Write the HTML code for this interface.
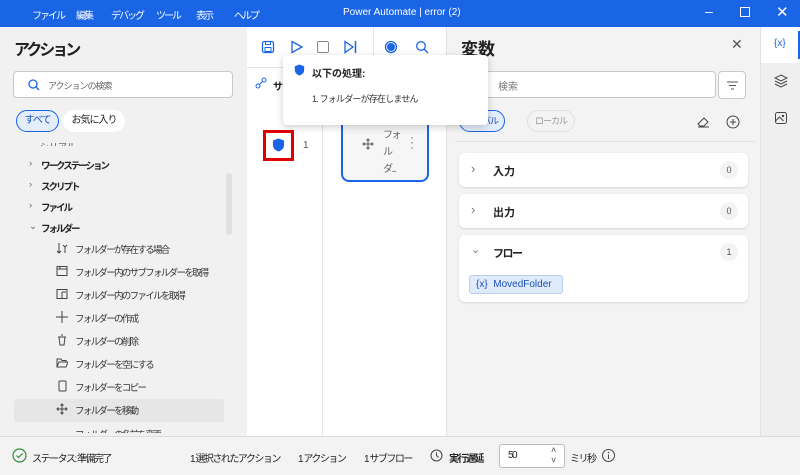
<!DOCTYPE html>
<html><head><meta charset="utf-8"><style>
*{margin:0;padding:0;box-sizing:border-box}
body{width:800px;height:475px;overflow:hidden;font-family:"Liberation Sans","Noto Sans CJK JP",sans-serif;background:#f3f3f3;position:relative;color:#222;font-size:11px}
.a{position:absolute}
.title{left:0;top:0;width:800px;height:27px;background:#1a64e6;color:#fff;font-size:10px}
.title span{position:absolute;top:7px}
.title .m{letter-spacing:-2px}
.left{left:0;top:27px;width:247px;height:409px;background:#f1f1f1}
.mid{left:247px;top:27px;width:199px;height:409px;background:#fff}
.var{left:446px;top:27px;width:314px;height:409px;background:#f3f3f3;border-left:1px solid #e3e3e3}
.strip{left:760px;top:27px;width:40px;height:409px;background:#efefef;border-left:1px solid #e0e0e0}
.status{left:0;top:436px;width:800px;height:39px;background:#f3f3f3;border-top:1px solid #dcdcdc}
.status span{letter-spacing:-1.5px}
.item{position:absolute;left:41px;font-size:9.5px;color:#222;letter-spacing:-2px;font-weight:bold}
.chev{position:absolute;left:-12px;color:#666;letter-spacing:0;font-weight:normal}
.fi{position:absolute;left:56px;width:12px;height:12px}
.ft{position:absolute;left:75px;font-size:9.5px;color:#333;letter-spacing:-1.7px;white-space:nowrap}
.card{position:absolute;left:459px;width:289px;background:#fff;border-radius:6px;box-shadow:0 1px 2px rgba(0,0,0,.12)}
.cnt{position:absolute;right:10px;top:10px;width:18px;height:18px;border-radius:9px;background:#f3f3f3;font-size:9px;text-align:center;line-height:18px;color:#555}
</style></head><body>
<div class="a title">
<span class="m" style="left:32px">ファイル</span><span class="m" style="left:76px">編集</span><span class="m" style="left:111px">デバッグ</span><span class="m" style="left:156px">ツール</span><span class="m" style="left:196px">表示</span><span class="m" style="left:234px">ヘルプ</span>
<span style="left:343px">Power Automate | error (2)</span>
<span style="left:705px;top:3px;font-size:14px">–</span>
<span style="left:740px;top:7px;width:10px;height:10px;border:1.5px solid #fff"></span>
<span style="left:776px;top:3px;font-size:15px">✕</span>
</div>

<div class="a left">
<div class="a" style="left:14px;top:9px;font-size:16px;font-weight:bold;color:#222;letter-spacing:-3px">アクション</div>
<div class="a" style="left:13px;top:44px;width:220px;height:27px;background:#fff;border:1px solid #c8c8c8;border-radius:4px">
<svg class="a" style="left:14px;top:7px" width="12" height="12"><circle cx="5" cy="5" r="4" fill="none" stroke="#1a64e6" stroke-width="1.3"/><line x1="8" y1="8" x2="11" y2="11" stroke="#1a64e6" stroke-width="1.3"/></svg>
<span class="a" style="left:34px;top:7px;font-size:9px;color:#666;letter-spacing:-1px">アクションの検索</span></div>
<div class="a" style="left:16px;top:83px;width:43px;height:22px;border:1px solid #1a64e6;background:#e4edfb;border-radius:11px;font-size:10px;color:#1a4fb8;text-align:center;line-height:20px;letter-spacing:-1px">すべて</div>
<div class="a" style="left:63px;top:83px;width:62px;height:22px;background:#fff;border-radius:11px;font-size:10px;text-align:center;line-height:22px;letter-spacing:-1px">お気に入り</div>
<div class="a" style="left:40px;top:113px;font-size:9px;color:#555;height:6px;overflow:hidden">シリアル</div>
<div class="item" style="top:131px"><span class="chev">›</span>ワークステーション</div>
<div class="item" style="top:152px"><span class="chev">›</span>スクリプト</div>
<div class="item" style="top:173px"><span class="chev">›</span>ファイル</div>
<div class="item" style="top:194px"><span class="chev">⌄</span>フォルダー</div>
<div class="a" style="left:226px;top:146px;width:6px;height:62px;background:#e0e0e0;border-radius:3px"></div>
<div class="a" style="left:14px;top:372px;width:210px;height:23px;background:#e6e6e6;border-radius:3px"></div>
<svg class="fi" style="top:215px" viewBox="0 0 12 12"><path d="M3 1v10M1 9l2 2 2-2M9 4v7M7 3l2 2 2-2" stroke="#444" fill="none"/></svg><div class="ft" style="top:215px">フォルダーが存在する場合</div>
<svg class="fi" style="top:238px" viewBox="0 0 12 12"><rect x="1" y="1.5" width="10" height="9" stroke="#444" fill="none"/><path d="M1 4h10M4 1.5v3" stroke="#444"/></svg><div class="ft" style="top:238px">フォルダー内のサブフォルダーを取得</div>
<svg class="fi" style="top:261px" viewBox="0 0 12 12"><rect x="1" y="1.5" width="10" height="9" stroke="#444" fill="none"/><path d="M6 4h4M6 4v6" stroke="#444"/></svg><div class="ft" style="top:261px">フォルダー内のファイルを取得</div>
<svg class="fi" style="top:284px" viewBox="0 0 12 12"><path d="M6 0v12M0 6h12" stroke="#444"/></svg><div class="ft" style="top:284px">フォルダーの作成</div>
<svg class="fi" style="top:307px" viewBox="0 0 12 12"><path d="M2 3h8M3 3l1 8h4l1-8M5 1h2" stroke="#444" fill="none"/></svg><div class="ft" style="top:307px">フォルダーの削除</div>
<svg class="fi" style="top:330px" viewBox="0 0 12 12"><path d="M1 10V2h4l1 1.5h4V5M1 10l2-5h9l-2 5z" stroke="#444" fill="none"/></svg><div class="ft" style="top:330px">フォルダーを空にする</div>
<svg class="fi" style="top:353px" viewBox="0 0 12 12"><rect x="3" y="1" width="7" height="10" rx="1" stroke="#444" fill="none"/></svg><div class="ft" style="top:353px">フォルダーをコピー</div>
<svg class="fi" style="top:376px" viewBox="0 0 12 12"><path d="M6 1v10M1 6h10M4.5 2.5L6 1l1.5 1.5M4.5 9.5L6 11l1.5-1.5M2.5 4.5L1 6l1.5 1.5M9.5 4.5L11 6 9.5 7.5" stroke="#444" fill="none"/></svg><div class="ft" style="top:376px">フォルダーを移動</div>
<div class="ft" style="top:400px;height:6px;overflow:hidden">フォルダーの名前を変更</div>
</div>

<div class="a mid">
<div class="a" style="left:0;top:40px;width:199px;height:1px;background:#e3e3e3"></div>
<div class="a" style="left:75px;top:41px;width:1px;height:368px;background:#e3e3e3"></div>
<div class="a" style="left:126px;top:0;width:1px;height:40px;background:#e3e3e3"></div>
<svg class="a" style="left:14px;top:13px" width="14" height="14" viewBox="0 0 14 14"><rect x="1.5" y="1.5" width="11" height="11" rx="2" stroke="#1a64e6" fill="none" stroke-width="1.3"/><rect x="4" y="7.5" width="6" height="4" stroke="#1a64e6" fill="none"/><path d="M4.5 1.5v3h5v-3" stroke="#1a64e6" fill="none"/></svg>
<svg class="a" style="left:43px;top:13px" width="14" height="14"><path d="M2 1.5L12 7 2 12.5z" stroke="#1a64e6" fill="none" stroke-width="1.3"/></svg>
<div class="a" style="left:70px;top:14px;width:12px;height:12px;border:1.3px solid #888;border-radius:2px"></div>
<svg class="a" style="left:96px;top:13px" width="14" height="14"><path d="M2 1.5L10 7 2 12.5z" stroke="#1a64e6" fill="none" stroke-width="1.3"/><path d="M12.5 1v12" stroke="#1a64e6" stroke-width="1.5"/></svg>
<svg class="a" style="left:137px;top:13px" width="14" height="14"><circle cx="7" cy="7" r="5.5" stroke="#1a64e6" fill="none" stroke-width="1.3"/><circle cx="7" cy="7" r="4" fill="#1a64e6"/></svg>
<svg class="a" style="left:168px;top:13px" width="14" height="14"><circle cx="6" cy="6" r="4.3" fill="none" stroke="#1a64e6" stroke-width="1.3"/><line x1="9" y1="9" x2="13" y2="13" stroke="#1a64e6" stroke-width="1.3"/></svg>
<svg class="a" style="left:8px;top:50px" width="12" height="12"><circle cx="3" cy="9" r="2" fill="none" stroke="#1a64e6"/><circle cx="9" cy="3" r="2" fill="none" stroke="#1a64e6"/><path d="M4.5 7.5l3-3" stroke="#1a64e6"/></svg>
<div class="a" style="left:26px;top:51px;font-size:10px;font-weight:bold">サ</div>
<div class="a" style="left:16px;top:103px;width:31px;height:31px;border:3px solid #e00000"></div>
<svg class="a" style="left:25px;top:111px" width="13" height="14" viewBox="0 0 13 14"><path d="M6.5 0.5L12 2.5v4.5c0 3.5-2.5 5.5-5.5 6.5C3.5 12.5 1 10.5 1 7V2.5z" fill="#1a64e6"/></svg>
<div class="a" style="left:56px;top:113px;font-size:10px;color:#555">1</div>
<div class="a" style="left:94px;top:90px;width:88px;height:65px;border:2px solid #1a64e6;border-top:none;border-radius:0 0 8px 8px;background:#f6f6f6"></div>
<svg class="a" style="left:115px;top:111px" width="12" height="12" viewBox="0 0 12 12"><path d="M6 1v10M1 6h10M4.5 2.5L6 1l1.5 1.5M4.5 9.5L6 11l1.5-1.5M2.5 4.5L1 6l1.5 1.5M9.5 4.5L11 6 9.5 7.5" stroke="#555" fill="none"/></svg>
<div class="a" style="left:136px;top:100px;font-size:10px;color:#666;line-height:17px;width:24px;letter-spacing:-1.5px">フォ<br>ル<br>ダ...</div>
<div class="a" style="left:163px;top:108px;font-size:12px;color:#666;line-height:5px">·<br>·<br>·</div>
</div>

<div class="a var">
<div class="a" style="left:14px;top:8px;font-size:17px;font-weight:bold">変数</div>
<div class="a" style="left:284px;top:9px;font-size:14px;color:#555">✕</div>
<div class="a" style="left:20px;top:44px;width:249px;height:27px;background:#fff;border:1px solid #c8c8c8;border-radius:4px"><span class="a" style="left:30px;top:6px;font-size:10px;color:#777">検索</span></div>
<div class="a" style="left:271px;top:44px;width:28px;height:28px;background:#fff;border:1px solid #c8c8c8;border-radius:4px"><svg class="a" style="left:8px;top:9px" width="11" height="9"><path d="M0 1h11M2 4.5h7M4 8h3" stroke="#555"/></svg></div>
<div class="a" style="left:12px;top:83px;width:46px;height:22px;border:1px solid #1a64e6;background:#e4edfb;border-radius:11px;font-size:9px;color:#1a4fb8;line-height:20px;text-align:right;padding-right:6px;letter-spacing:-1px">ーバル</div>
<div class="a" style="left:80px;top:83px;width:48px;height:22px;border:1px solid #e0e0e0;border-radius:11px;font-size:9px;color:#999;line-height:20px;text-align:center;letter-spacing:-1px">ローカル</div>
<svg class="a" style="left:250px;top:89px" width="13" height="12"><path d="M1 8l6-6 4 4-4 4H3z" stroke="#444" fill="none"/><path d="M1 11h11" stroke="#444"/></svg>
<svg class="a" style="left:279px;top:88px" width="14" height="14"><circle cx="7" cy="7" r="6" stroke="#444" fill="none"/><path d="M7 4v6M4 7h6" stroke="#444"/></svg>
<div class="a" style="left:8px;top:114px;width:300px;height:1px;background:#e3e3e3"></div>
</div>

<div class="a" style="left:283px;top:55px;width:205px;height:70px;background:#fff;border-radius:4px;box-shadow:0 2px 8px rgba(0,0,0,.2);z-index:10">
<svg class="a" style="left:11px;top:9px" width="11" height="12" viewBox="0 0 13 14"><path d="M6.5 0.5L12 2.5v4.5c0 3.5-2.5 5.5-5.5 6.5C3.5 12.5 1 10.5 1 7V2.5z" fill="#1a64e6"/></svg>
<div class="a" style="left:29px;top:10px;font-size:10px;font-weight:bold">以下の処理:</div>
<div class="a" style="left:29px;top:37px;font-size:9px;color:#333;letter-spacing:-0.8px">1. フォルダーが存在しません</div>
</div>

<div class="card" style="top:153px;height:34px"><span class="a" style="left:12px;top:8px;color:#777;font-size:13px">›</span><span class="a" style="left:34px;top:10px;font-size:11px;font-weight:bold">入力</span><div class="cnt" style="top:8px">0</div></div>
<div class="card" style="top:194px;height:34px"><span class="a" style="left:12px;top:8px;color:#777;font-size:13px">›</span><span class="a" style="left:34px;top:10px;font-size:11px;font-weight:bold">出力</span><div class="cnt" style="top:8px">0</div></div>
<div class="card" style="top:235px;height:67px"><span class="a" style="left:12px;top:8px;color:#777;font-size:11px">⌄</span><span class="a" style="left:34px;top:10px;font-size:11px;font-weight:bold;letter-spacing:-1.5px">フロー</span><div class="cnt" style="top:8px">1</div>
<div class="a" style="left:10px;top:40px;width:94px;height:19px;background:#dfeafb;border:1px solid #b8cff2;border-radius:3px;font-size:10px;color:#1a4fb8;line-height:17px;padding-left:6px">{x}&nbsp; MovedFolder</div></div>

<div class="a strip">
<div class="a" style="left:0;top:0;width:40px;height:36px;background:#fff"></div>
<div class="a" style="left:37px;top:4px;width:3px;height:28px;background:#1a64e6"></div>
<div class="a" style="left:13px;top:11px;font-size:10px;color:#1a64e6">{x}</div>
<svg class="a" style="left:13px;top:47px" width="14" height="14"><path d="M7 1l6 3-6 3-6-3zM1 7l6 3 6-3M1 10l6 3 6-3" stroke="#444" fill="none"/></svg>
<svg class="a" style="left:13px;top:84px" width="14" height="14"><rect x="1.5" y="1.5" width="11" height="11" rx="2" stroke="#444" fill="none"/><path d="M1.5 10l4-4 4 4" stroke="#444" fill="none"/><circle cx="9" cy="5" r="1.2" fill="#444"/></svg>
</div>

<div class="a status">
<svg class="a" style="left:12px;top:11px" width="15" height="15"><circle cx="7.5" cy="7.5" r="6.5" stroke="#2e8b3a" fill="none" stroke-width="1.2"/><path d="M4.5 7.5l2 2 4-4" stroke="#2e8b3a" fill="none" stroke-width="1.2"/></svg>
<span class="a" style="left:32px;top:13px;font-size:10px">ステータス: 準備完了</span>
<span class="a" style="left:190px;top:13px;font-size:10px">1 選択されたアクション</span>
<span class="a" style="left:298px;top:13px;font-size:10px">1 アクション</span>
<span class="a" style="left:364px;top:13px;font-size:10px">1 サブフロー</span>
<svg class="a" style="left:430px;top:12px" width="13" height="13"><circle cx="6.5" cy="6.5" r="5.5" stroke="#444" fill="none"/><path d="M6.5 3.5v3l2 2" stroke="#444" fill="none"/></svg>
<span class="a" style="left:449px;top:13px;font-size:10px;font-weight:bold">実行遅延</span>
<div class="a" style="left:499px;top:7px;width:66px;height:24px;background:#fff;border:1px solid #bbb;border-radius:3px"><span class="a" style="left:8px;top:5px;font-size:10px">50</span><span class="a" style="left:51px;top:0px;font-size:9px;line-height:10px;color:#444;letter-spacing:0">˄<br>˅</span></div>
<span class="a" style="left:570px;top:13px;font-size:10px">ミリ秒</span>
<svg class="a" style="left:601px;top:11px" width="15" height="15"><circle cx="7.5" cy="7.5" r="6" stroke="#444" fill="none"/><path d="M7.5 6.5v4.5" stroke="#444"/><circle cx="7.5" cy="4.5" r=".8" fill="#444"/></svg>
</div>
</body></html>
